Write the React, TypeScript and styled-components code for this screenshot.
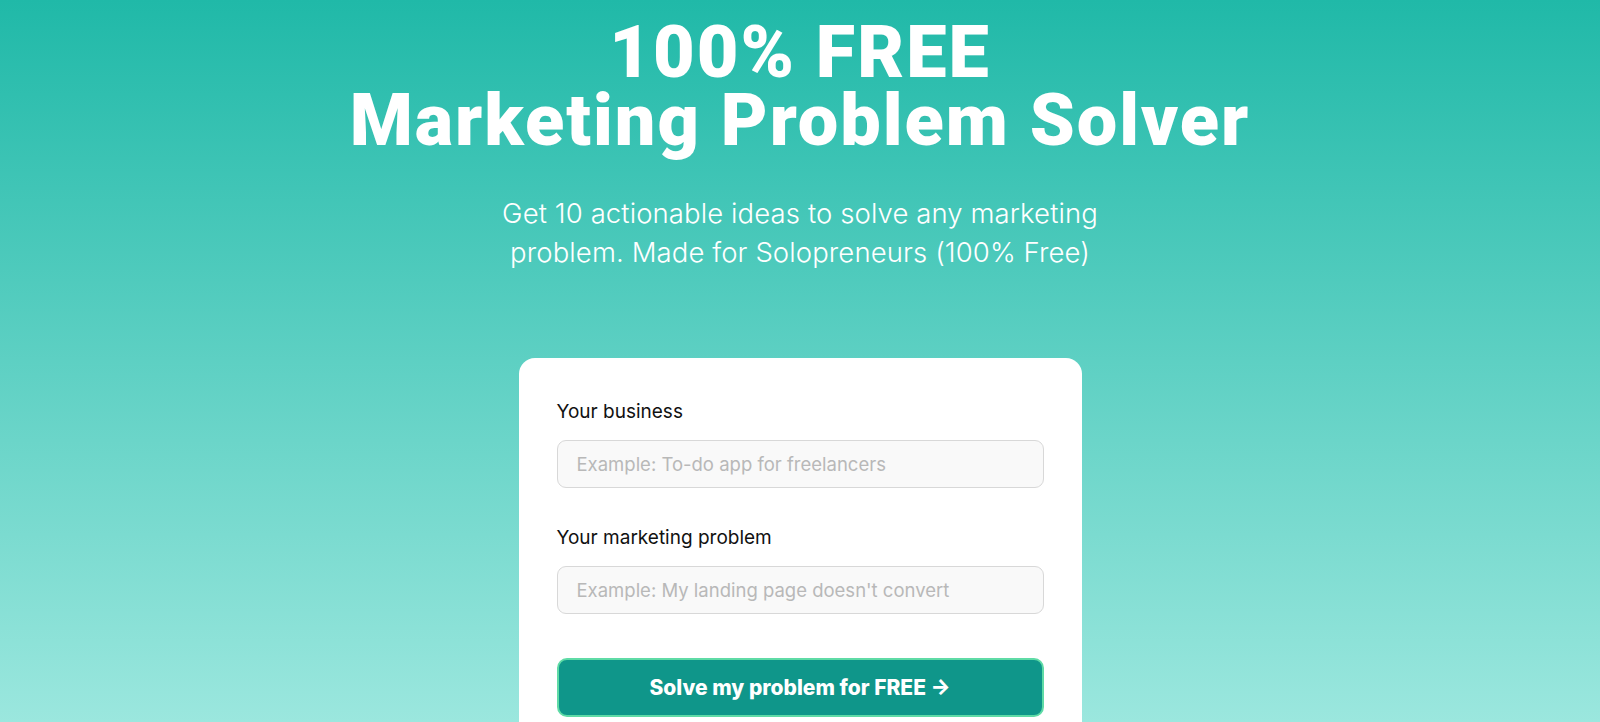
import styled, { createGlobalStyle } from 'styled-components';

const GlobalStyle = createGlobalStyle`
  html, body {
    margin: 0;
    padding: 0;
  }
  body {
    font-family: 'Inter', 'Liberation Sans', sans-serif;
    background: #9be7de;
  }
  * {
    box-sizing: border-box;
  }
`;

const Page = styled.div`
  min-height: 100vh;
  background: linear-gradient(180deg, #20b9a8 0%, #9be7de 100%);
  background-size: 100% 722px;
  background-repeat: no-repeat;
  display: flex;
  flex-direction: column;
  align-items: center;
  padding-top: 19px;
`;

const Title = styled.h1`
  margin: 0;
  font-family: 'Roboto', 'Liberation Sans', sans-serif;
  font-weight: 900;
  font-size: 72px;
  line-height: 68px;
  color: #ffffff;
  text-align: center;
  letter-spacing: 2px;
`;

const Subtitle = styled.p`
  margin: 39px 0 0;
  width: 640px;
  font-family: 'Inter', 'Liberation Sans', sans-serif;
  font-weight: 300;
  font-size: 27.5px;
  line-height: 39px;
  letter-spacing: 0.1px;
  color: #ffffff;
  text-align: center;
`;

const Card = styled.form`
  margin-top: 86px;
  width: 563px;
  background: #ffffff;
  border-radius: 16px;
  padding: 41px 38px 40px;
  display: flex;
  flex-direction: column;
`;

const Field = styled.div<{ last?: boolean }>`
  display: flex;
  flex-direction: column;
  gap: 15px;
  margin-bottom: ${(p) => (p.last ? '28px' : '37px')};
`;

const Label = styled.label`
  font-size: 19px;
  line-height: 26px;
  color: #111111;
`;

const Input = styled.input`
  height: 48px;
  width: 100%;
  border: 1px solid #d8d8d8;
  border-radius: 9px;
  background: #f9f9f9;
  padding: 0 19px;
  font-family: 'Inter', 'Liberation Sans', sans-serif;
  font-size: 18.5px;
  color: #222222;
  outline: none;

  &::placeholder {
    color: #b8b8b8;
  }
`;

const SubmitButton = styled.button`
  margin-top: 16px;
  height: 59px;
  width: 100%;
  border: 2px solid #5fdba6;
  border-radius: 10px;
  background: #0f968a;
  color: #ffffff;
  font-family: 'Inter', 'Liberation Sans', sans-serif;
  font-weight: 800;
  font-size: 21px;
  cursor: pointer;
`;

const App: React.FC = () => {
  return (
    <>
      <GlobalStyle />
      <Page>
        <Title>
          100% FREE
          <br />
          Marketing Problem Solver
        </Title>
        <Subtitle>Get 10 actionable ideas to solve any marketing problem. Made for Solopreneurs (100% Free)</Subtitle>
        <Card onSubmit={(e) => e.preventDefault()}>
          <Field>
            <Label htmlFor='business'>Your business</Label>
            <Input id='business' type='text' placeholder='Example: To-do app for freelancers' />
          </Field>
          <Field last>
            <Label htmlFor='problem'>Your marketing problem</Label>
            <Input id='problem' type='text' placeholder="Example: My landing page doesn't convert" />
          </Field>
          <SubmitButton type='submit'>Solve my problem for FREE →</SubmitButton>
        </Card>
      </Page>
    </>
  );
};

export default App;
